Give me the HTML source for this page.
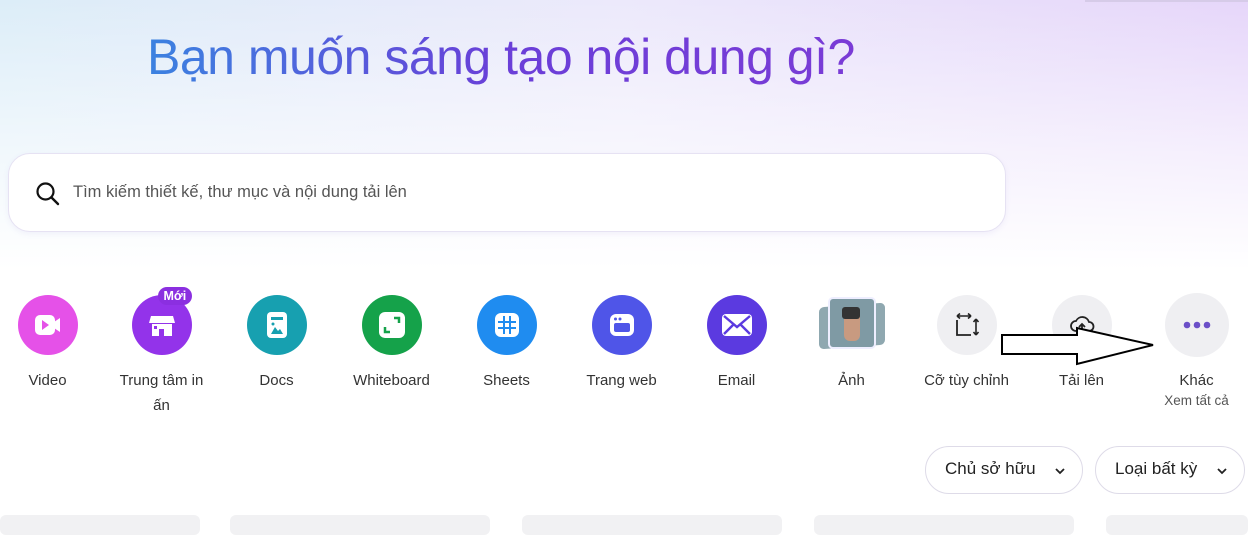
<!DOCTYPE html>
<html><head><meta charset="utf-8"><style>
*{margin:0;padding:0;box-sizing:border-box}
body{width:1248px;height:523px;overflow:hidden;font-family:"Liberation Sans","DejaVu Sans",sans-serif;background:#fff;position:relative}
.bg{position:absolute;left:0;top:0;width:1248px;height:300px;background:linear-gradient(90deg,#dcedf8 0%,#ece9fb 50%,#e6d6fa 100%)}
.bg2{position:absolute;left:0;top:0;width:1248px;height:300px;background:linear-gradient(180deg,rgba(255,255,255,0) 0%,rgba(255,255,255,.6) 50%,#fff 90%)}
h1{position:absolute;left:147px;top:28px;font-size:50px;font-weight:normal;letter-spacing:-0.5px;background:linear-gradient(90deg,#3b82e0,#6a3fd8 50%,#7a3bd6);-webkit-background-clip:text;background-clip:text;color:transparent;white-space:nowrap}
.search{position:absolute;left:8px;top:153px;width:998px;height:79px;background:#fff;border-radius:22px;border:1px solid #e6e2f3;box-shadow:0 2px 6px rgba(120,100,200,.08)}
.search span{position:absolute;left:64px;top:29px;font-size:16.5px;color:#555}
.item{position:absolute;top:295px;width:115px;text-align:center}
.c{width:60px;height:60px;border-radius:50%;margin:0 auto;position:relative;display:flex;align-items:center;justify-content:center}
.lbl{margin-top:13px;font-size:15px;color:#333;line-height:25px}
.sub{font-size:13.5px;color:#555;line-height:16px}
.btn{position:absolute;top:446px;height:48px;border:1px solid #dedbe8;border-radius:24px;background:#fff;font-size:17px;color:#222;padding:12px 0 0 19px}
.card{position:absolute;top:515px;height:20px;background:#f1f1f3;border-radius:6px}
</style></head><body>
<div class="bg"></div><div class="bg2"></div>
<div style="position:absolute;left:1085px;top:0;width:163px;height:2px;background:#d6cbe8"></div>
<h1>Bạn muốn sáng tạo nội dung gì?</h1>
<div class="search">
<svg style="position:absolute;left:26px;top:27px" width="26" height="26" viewBox="0 0 26 26"><circle cx="10.5" cy="10.5" r="8" fill="none" stroke="#111" stroke-width="2.2"/><line x1="16.5" y1="16.5" x2="23" y2="23" stroke="#111" stroke-width="2.4" stroke-linecap="round"/></svg>
<span>Tìm kiếm thiết kế, thư mục và nội dung tải lên</span></div>

<div class="item" style="left:-10px"><div class="c" style="background:#e551e8"><svg width="30" height="26" viewBox="0 0 30 26"><rect x="2" y="3" width="20" height="20" rx="5" fill="#fff"/><path d="M21 10l6-4v14l-6-4z" fill="#fff"/><path d="M9 8v10l7-5z" fill="#e551e8"/></svg></div><div class="lbl">Video</div></div>

<div class="item" style="left:104px"><div class="c" style="background:#9333ea"><svg width="28" height="26" viewBox="0 0 28 26"><path d="M3 4h22l2 7H1z" fill="#fff"/><path d="M4 12h20v12H16v-7h-5v7H4z" fill="#fff"/><rect x="6" y="14" width="3" height="3" fill="#9333ea"/></svg><div style="position:absolute;left:26px;top:-8px;background:#8b2fe0;color:#fff;font-size:12.5px;font-weight:bold;padding:1px 6px;border-radius:9px;line-height:16px">Mới</div></div><div class="lbl">Trung tâm in<br>ấn</div></div>

<div class="item" style="left:219px"><div class="c" style="background:#17a0b0"><svg width="24" height="30" viewBox="0 0 24 30"><rect x="2" y="2" width="20" height="26" rx="4" fill="#fff"/><rect x="6" y="7" width="12" height="3" fill="#17a0b0"/><path d="M6 24l4-7 3 4 2-2 3 5z" fill="#17a0b0"/><circle cx="8" cy="14" r="1.5" fill="#17a0b0"/></svg></div><div class="lbl">Docs</div></div>

<div class="item" style="left:334px"><div class="c" style="background:#15a24a"><svg width="30" height="30" viewBox="0 0 30 30"><rect x="2" y="2" width="26" height="26" rx="6" fill="#fff"/><path d="M17 8h5v5M8 17v5h5" fill="none" stroke="#15a24a" stroke-width="2.5"/></svg></div><div class="lbl">Whiteboard</div></div>

<div class="item" style="left:449px"><div class="c" style="background:#1f8cf0"><svg width="30" height="30" viewBox="0 0 30 30"><rect x="3" y="3" width="24" height="24" rx="6" fill="#fff"/><path d="M6 12h18M6 18h18M12 6v18M18 6v18" stroke="#1f8cf0" stroke-width="2"/></svg></div><div class="lbl">Sheets</div></div>

<div class="item" style="left:564px"><div class="c" style="background:#4f55e8"><svg width="30" height="28" viewBox="0 0 30 28"><rect x="3" y="3" width="24" height="22" rx="6" fill="#fff"/><rect x="7" y="12" width="16" height="9" rx="2" fill="#4f55e8"/><circle cx="8.5" cy="8" r="1.5" fill="#4f55e8"/><circle cx="13" cy="8" r="1.5" fill="#4f55e8"/></svg></div><div class="lbl">Trang web</div></div>

<div class="item" style="left:679px"><div class="c" style="background:#5b3ae0"><svg width="32" height="24" viewBox="0 0 32 24"><rect x="1" y="1" width="30" height="22" rx="4" fill="#fff"/><path d="M3 3l13 11 13-11M3 21l9-9M29 21l-9-9" fill="none" stroke="#5b3ae0" stroke-width="2.4"/></svg></div><div class="lbl">Email</div></div>

<div class="item" style="left:794px"><div class="c"><div style="position:absolute;left:-3px;top:10px;width:66px;height:42px;background:#8fa8b0;border-radius:5px;transform:skewY(-4deg)"></div><div style="position:absolute;left:6px;top:2px;width:48px;height:52px;background:#7f9aa4;border:2px solid #eef;border-radius:5px"></div><div style="position:absolute;left:22px;top:16px;width:16px;height:30px;background:#c89a80;border-radius:6px"></div><div style="position:absolute;left:20px;top:12px;width:18px;height:12px;background:#333;border-radius:3px"></div></div><div class="lbl">Ảnh</div></div>

<div class="item" style="left:909px"><div class="c" style="background:#efeff2"><svg width="28" height="28" viewBox="0 0 28 28"><path d="M4 9v15h14" fill="none" stroke="#222" stroke-width="1.8"/><path d="M4 5h14M4 5l3-2.5M4 5l3 2.5M18 5l-3-2.5M18 5l-3 2.5" fill="none" stroke="#222" stroke-width="1.6"/><path d="M23 8v16M23 8l-2.5 3M23 8l2.5 3M23 24l-2.5-3M23 24l2.5-3" fill="none" stroke="#222" stroke-width="1.6"/></svg></div><div class="lbl">Cỡ tùy chỉnh</div></div>

<div class="item" style="left:1024px"><div class="c" style="background:#efeff2"><svg width="28" height="24" viewBox="0 0 28 24"><path d="M8 18a5 5 0 010-10 7 7 0 0113 1 4.5 4.5 0 010 9" fill="none" stroke="#222" stroke-width="1.8"/><path d="M14 20v-9M11 14l3-3 3 3" fill="none" stroke="#222" stroke-width="1.8"/></svg></div><div class="lbl">Tải lên</div></div>

<div class="item" style="left:1139px"><div class="c" style="background:#efeff2;width:64px;height:64px;margin-top:-2px"><svg width="30" height="8" viewBox="0 0 30 8"><circle cx="5" cy="4" r="3.3" fill="#6b4fc8"/><circle cx="15" cy="4" r="3.3" fill="#6b4fc8"/><circle cx="25" cy="4" r="3.3" fill="#6b4fc8"/></svg></div><div class="lbl" style="margin-top:11px">Khác</div><div class="sub">Xem tất cả</div></div>

<svg style="position:absolute;left:0;top:0" width="1248" height="523"><polygon points="1002,335 1077,335 1077,328 1153,345 1077,364 1077,354 1002,354" fill="#fff" stroke="#000" stroke-width="2"/></svg>

<div class="btn" style="left:925px;width:158px">Chủ sở hữu<svg style="position:absolute;left:128px;top:20px" width="12" height="8" viewBox="0 0 12 8"><path d="M2 2l4 4 4-4" fill="none" stroke="#222" stroke-width="1.8"/></svg></div>
<div class="btn" style="left:1095px;width:150px">Loại bất kỳ<svg style="position:absolute;left:120px;top:20px" width="12" height="8" viewBox="0 0 12 8"><path d="M2 2l4 4 4-4" fill="none" stroke="#222" stroke-width="1.8"/></svg></div>

<div class="card" style="left:0;width:200px"></div>
<div class="card" style="left:230px;width:260px"></div>
<div class="card" style="left:522px;width:260px"></div>
<div class="card" style="left:814px;width:260px"></div>
<div class="card" style="left:1106px;width:142px"></div>
</body></html>
